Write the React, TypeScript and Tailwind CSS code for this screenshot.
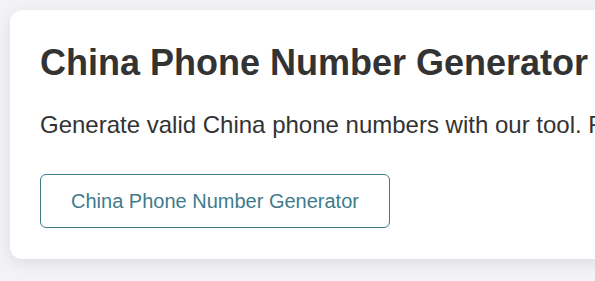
export default function App() {
  return (
    <div className="w-screen h-[281px] overflow-hidden bg-[#f2f2f7] font-['Liberation_Sans',Arial,sans-serif]">
      <div className="w-[760px] p-[10px]">
        <div className="w-[720px] bg-white rounded-xl shadow-[0_4px_16px_rgba(0,0,0,0.09)] px-[30px] pt-[32px] pb-[31px]">
          <h1 className="text-[36px] leading-[41px] font-bold text-[#333333] whitespace-nowrap">
            China Phone Number Generator
          </h1>
          <p className="mt-[28px] text-[24px] leading-[28px] text-[#333333] whitespace-nowrap overflow-hidden">
            Generate valid China phone numbers with our tool. Free and fast.
          </p>
          <button className="mt-[35px] w-[350px] h-[54px] rounded-md border border-[#3f7b8c] text-[#3f7b8c] text-[20px] leading-[23px] flex items-center justify-center">
            China Phone Number Generator
          </button>
        </div>
      </div>
    </div>
  );
}
